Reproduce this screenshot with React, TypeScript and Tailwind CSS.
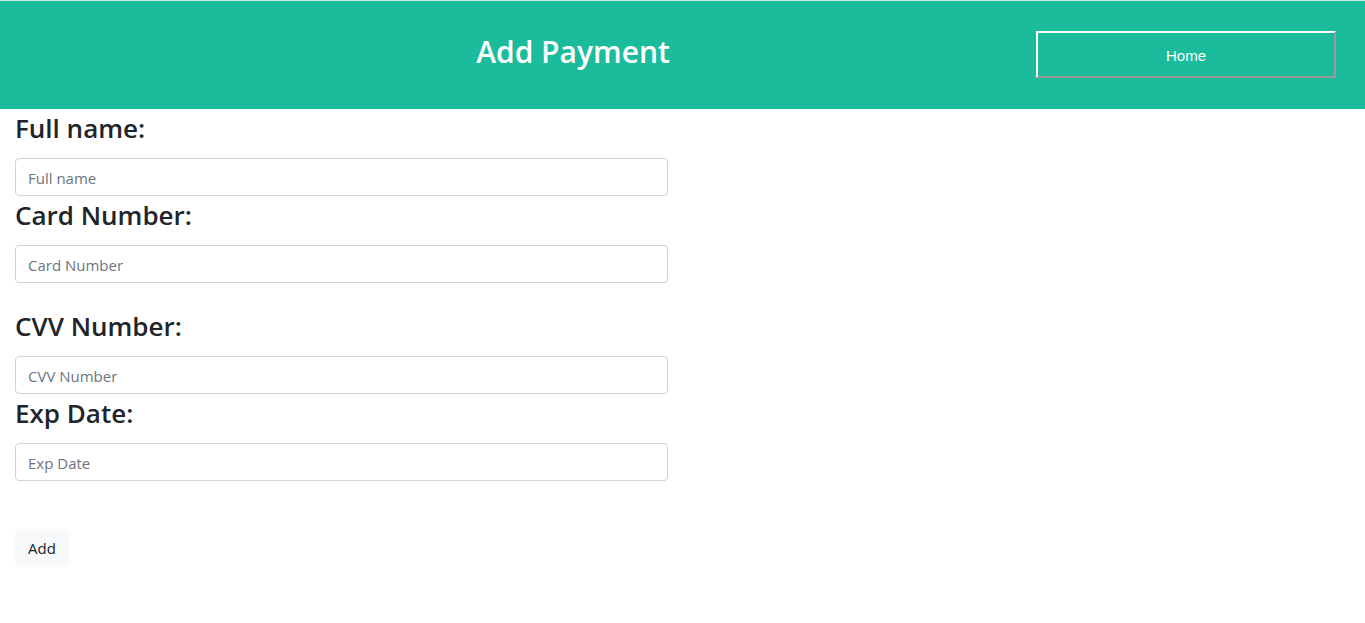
import React from 'react';

const fields = [
    { label: 'Full name:', placeholder: 'Full name', gap: false },
    { label: 'Card Number:', placeholder: 'Card Number', gap: false },
    { label: 'CVV Number:', placeholder: 'CVV Number', gap: true },
    { label: 'Exp Date:', placeholder: 'Exp Date', gap: false },
];

const App: React.FC = () => {
    return (
        <div className="min-h-screen bg-white font-['Open_Sans',sans-serif] text-[#212529]">
            <header className="flex h-[109px] items-center border-t border-[#cfeee7] bg-[#1abc9c]">
                <div className="w-[1036px] pl-[110px] text-center">
                    <h1 className="-mt-[8px] text-[30px] font-semibold text-white">Add Payment</h1>
                </div>
                <button className="-mt-[2px] h-[47px] w-[300px] border-2 border-t-white border-l-white border-b-[#9b9b9b] border-r-[#9b9b9b] bg-transparent pt-[5px] font-['Liberation_Sans',sans-serif] text-[15px] text-white">
                    Home
                </button>
            </header>

            <form className="w-[653px] px-[15px]" onSubmit={(e) => e.preventDefault()}>
                {fields.map((f) => (
                    <div key={f.label} className={f.gap ? 'pt-[24px]' : ''}>
                        <label className="mb-[11px] block text-[26px] font-semibold leading-[38px]">{f.label}</label>
                        <input
                            type="text"
                            placeholder={f.placeholder}
                            className="block h-[38px] w-[653px] rounded-[4px] border border-[#ced4da] px-[12px] pt-[2px] text-[15px] placeholder:text-[#6c757d] focus:outline-none"
                        />
                    </div>
                ))}
                <button className="mt-[48px] h-[38px] rounded-[4px] bg-[#f8f9fa] px-[13px] text-[15px] text-[#212529]">
                    Add
                </button>
            </form>
        </div>
    );
};

export default App;
